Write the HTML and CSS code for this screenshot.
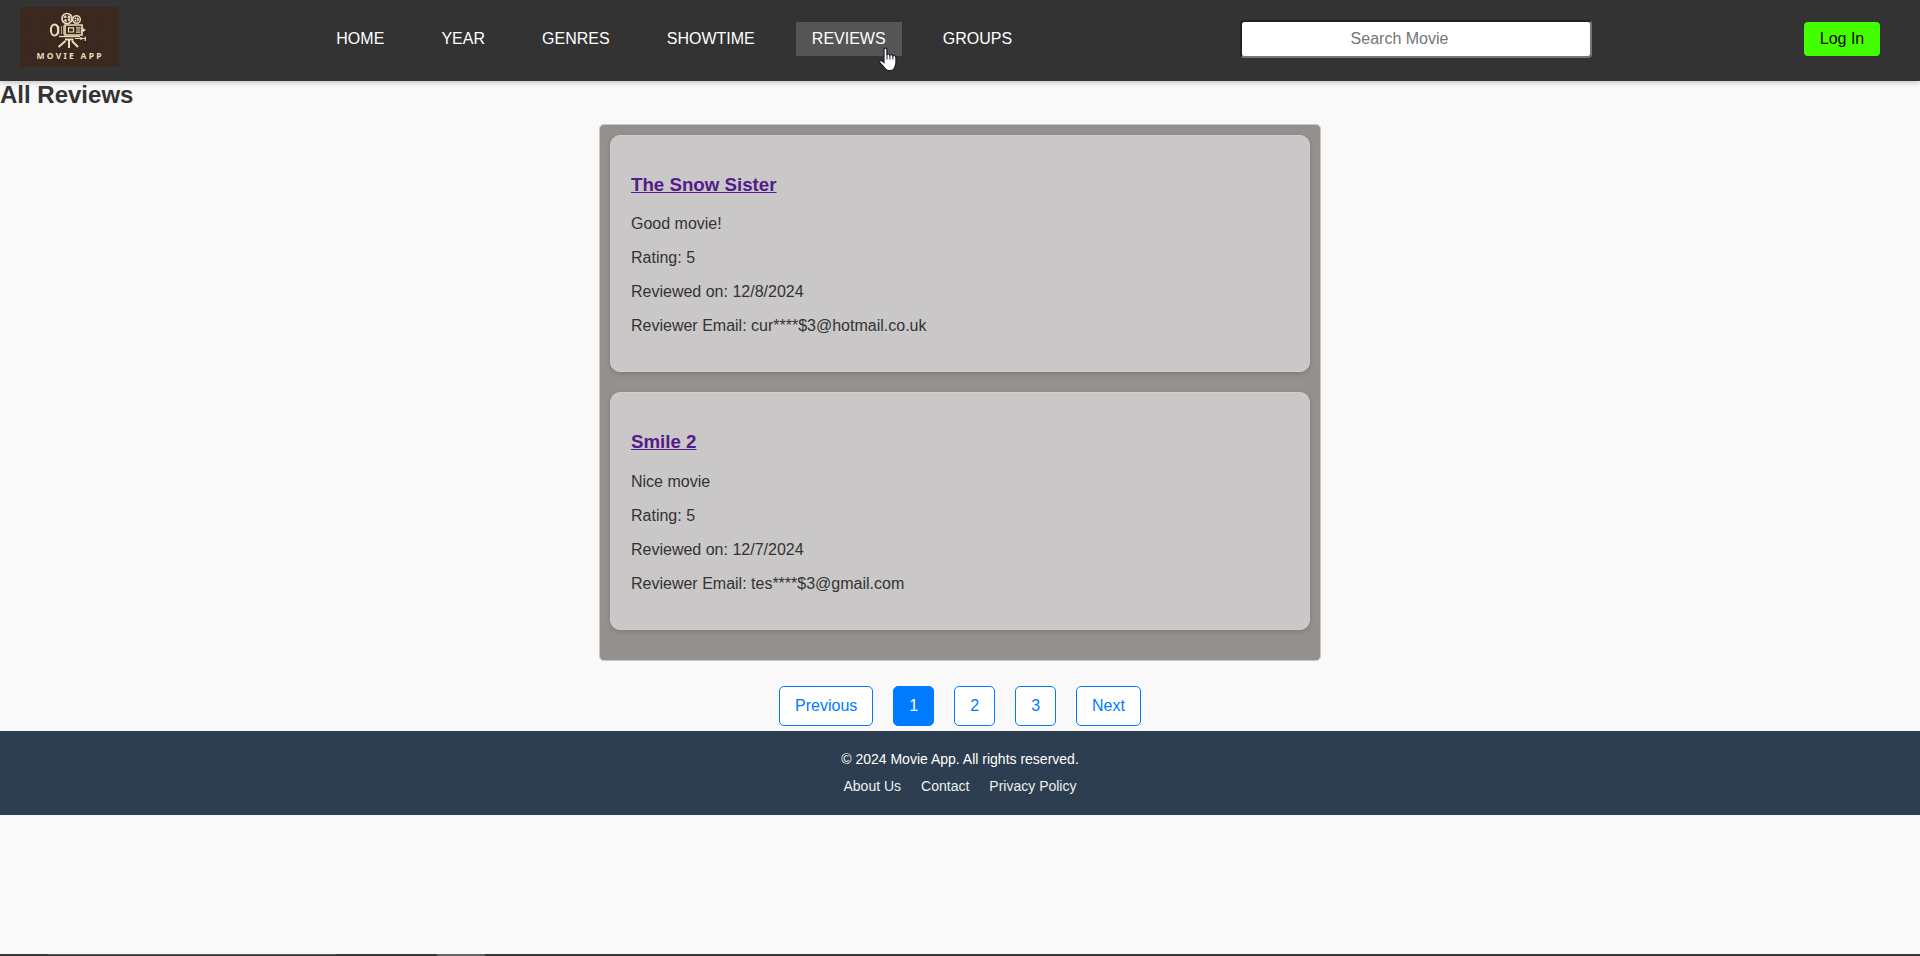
FILE: index.html
```html
<!DOCTYPE html>
<html lang="en">
<head>
<meta charset="utf-8">
<title>Movie App</title>
<link rel="stylesheet" href="styles.css">
</head>
<body>
<header class="header">
  <svg class="logo" viewBox="0 0 99 60" aria-label="Movie App">
    <rect width="99" height="60" fill="#3b281f"/>
    <path d="M0 9.500H99M0 22.500H99M0 35.500H99M0 48.500H99M10.500 0V60M24.500 0V60M38.500 0V60M52.500 0V60M66.500 0V60M80.500 0V60" stroke="#33231c" stroke-width=".4"/>
    <g fill="none" stroke="#e9dcb9">
      <circle cx="47" cy="11.500" r="5" stroke-width="1.700"/>
      <circle cx="56.500" cy="12.500" r="3.800" stroke-width="1.500"/>
      <circle cx="47" cy="11.500" r="2.400" stroke-width="2.600" stroke-dasharray="2.200 1.500"/>
      <circle cx="56.500" cy="12.500" r="1.500" stroke-width="1.800" stroke-dasharray="1.500 .8"/>
      <ellipse cx="34.500" cy="23" rx="3.600" ry="5.600" stroke-width="2"/>
      <path d="M36 17.500L38.500 20V26L36 28.500" stroke-width="1.600"/>
      <path d="M41.500 19V27M43.500 18.500V27.500" stroke-width="1" opacity=".7"/>
      <path d="M45 18H62V28H45Z" stroke-width="1.700"/>
      <path d="M48.500 20.800H53.500V25H48.500ZM56 20.800H60.500M56 23H60.500M56 25.200H60.500" stroke-width="1.200"/>
      <path d="M62 20.500L66 23L62 25.500Z" fill="#e9dcb9" stroke="none"/>
      <path d="M39 29.500H60" stroke-width="1.300"/>
      <path d="M55 31.500H65M61 30V33M65.300 29.500V34" stroke-width="1.200"/>
      <path d="M45 32.500H53.500M45.500 34L38.500 40M49 33V41M52 34L58 40" stroke-width="2"/>
    </g>
    <text class="logo-text" x="16.500" y="51.500" textLength="65">MOVIE APP</text>
  </svg>
  <nav class="nav">
    <a class="nav-link">HOME</a><a class="nav-link">YEAR</a><a class="nav-link">GENRES</a><a class="nav-link">SHOWTIME</a><a class="nav-link active">REVIEWS<svg class="cursor" viewBox="0 0 18 24"><path d="M5 1.800C5 .3 7.900 .3 7.900 1.800V7.300C8.600 6 10.600 6.400 10.800 7.500C11.700 6.600 13.600 7 13.800 8.300C15 7.600 16.900 8.200 16.900 9.900V15.500C16.900 19 15.500 20 14.700 21.500C13.500 23.500 8 23.700 6.800 21.800L1 15.200C-.1 13.500 1.300 12.300 2.800 13.300L5 15Z" fill="#fff" stroke="#1c1b29" stroke-width="1.200"/><path d="M8 7V12M10.900 7.500V12M13.900 8.500V12" stroke="#1c1b29"/></svg></a><a class="nav-link">GROUPS</a>
  </nav>
  <input class="search" type="text" placeholder="Search Movie">
  <button class="login">Log In</button>
</header>
<main>
  <h2 class="title">All Reviews</h2>
  <section class="reviews">
    <article class="review">
      <h3 class="movie"><a class="movie-link" href="#">The Snow Sister</a></h3>
      <p class="line">Good movie!</p>
      <p class="line">Rating: 5</p>
      <p class="line">Reviewed on: 12/8/2024</p>
      <p class="line">Reviewer Email: cur****$3@hotmail.co.uk</p>
    </article>
    <article class="review">
      <h3 class="movie"><a class="movie-link" href="#">Smile 2</a></h3>
      <p class="line">Nice movie</p>
      <p class="line">Rating: 5</p>
      <p class="line">Reviewed on: 12/7/2024</p>
      <p class="line">Reviewer Email: tes****$3@gmail.com</p>
    </article>
  </section>
  <div class="pagination">
    <button class="page">Previous</button><button class="page current">1</button><button class="page">2</button><button class="page">3</button><button class="page">Next</button>
  </div>
</main>
<footer class="footer">
  <p class="copyright">© 2024 Movie App. All rights reserved.</p>
  <div class="footer-links"><a>About Us</a><a>Contact</a><a>Privacy Policy</a></div>
</footer>
<div class="taskbar"><span class="task-window"></span><span class="task-active"></span></div>
</body>
</html>
```
FILE: styles.css
```css
* { box-sizing: border-box; }
body {
  margin: 0;
  height: 956px;
  overflow: hidden;
  display: flex;
  flex-direction: column;
  background: #f9f9f9;
  color: #333;
  font: 16px/18px "Liberation Sans", Arial, sans-serif;
}
.header {
  display: flex;
  align-items: flex-start;
  flex: none;
  height: 81px;
  padding: 7px 40px 0 20px;
  background: #333;
  box-shadow: 0 2px 5px rgba(0, 0, 0, .2);
}
.logo { width: 99px; height: 60px; }
.logo-text { font: bold 8.500px "Noto Sans", sans-serif; fill: #e9dcb9; }
.nav { display: flex; gap: 25.100px; margin: 15px 0 0 201.300px; }
.nav-link { position: relative; padding: 8px 16px; color: #fff; }
.nav-link.active { background: #555; }
.cursor { position: absolute; left: 83.500px; top: 24.500px; width: 18px; height: 25px; }
.search {
  width: 352px;
  height: 38px;
  margin: 13px 0 0 auto;
  padding: 0 33px 0 0;
  border: 2px inset #767676;
  border-radius: 4px;
  text-align: center;
  font: 16px "Liberation Sans", Arial, sans-serif;
}
.search::placeholder { color: #757575; }
.login {
  width: 76px;
  height: 34px;
  margin: 15px 0 0 212px;
  padding: 0;
  border: 0;
  border-radius: 4px;
  background: #4f0;
  color: #000;
  font: 16px "Liberation Sans", Arial, sans-serif;
}
.title { margin: 0; font-size: 24px; line-height: 28px; }
.reviews {
  width: 722px;
  height: 537px;
  margin: 15px auto 0;
  padding: 10px;
  border: 1px solid #c9c7c7;
  border-radius: 5px;
  background: #94908e;
}
.review {
  height: 237.400px;
  margin-bottom: 20px;
  padding: 38px 20px 0;
  border: 1px solid #cfcdcd;
  border-radius: 10px;
  background: #c9c7c7;
  box-shadow: 0 2px 5px rgba(0, 0, 0, .15);
}
.movie { margin: 0 0 20.200px; font-size: 18.720px; line-height: 21px; }
.movie-link { color: #551a8b; }
.line { margin: 0 0 16px; }
.pagination { display: flex; justify-content: center; gap: 20px; margin-top: 25px; }
.page {
  height: 40px;
  padding: 0 15px;
  border: 1px solid #007bff;
  border-radius: 5px;
  background: #fff;
  color: #007bff;
  font: 16px "Liberation Sans", Arial, sans-serif;
}
.page.current { background: #007bff; color: #fff; }
.footer {
  flex: none;
  height: 84px;
  margin-top: 5px;
  padding-top: 20px;
  background: #2c3e50;
  color: #fff;
  font-size: 14px;
  line-height: 17px;
  text-align: center;
}
.copyright { margin: 0; }
.footer-links { display: flex; justify-content: center; gap: 20px; margin-top: 10px; color: #ecf0f1; }
.taskbar { display: flex; height: 2px; margin-top: auto; background: #3a3637; }
.task-window { width: 288px; margin-left: 48px; border-top: 1px solid #5a5657; }
.task-active { width: 48px; margin-left: 101px; background: #666263; }
```
